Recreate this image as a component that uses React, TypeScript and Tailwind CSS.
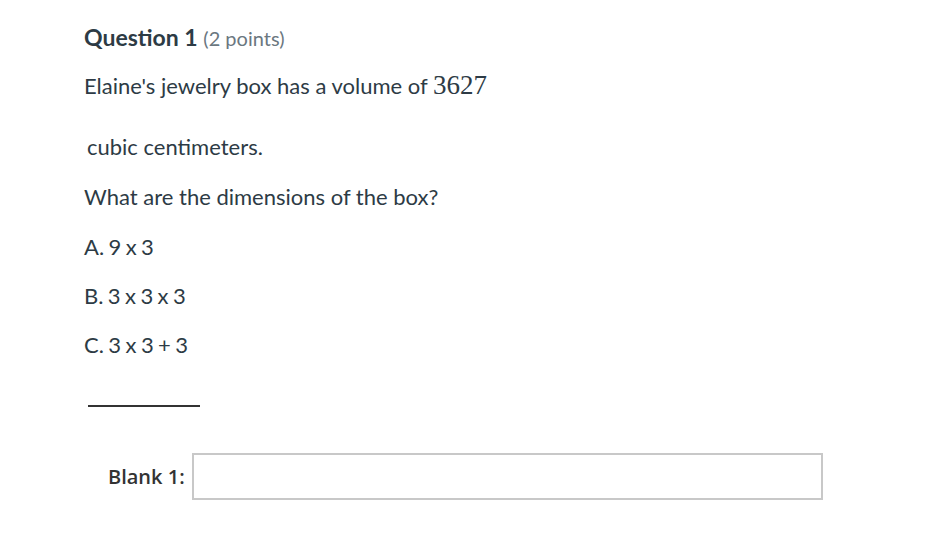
export default function App() {
  return (
    <div className="w-[946px] h-[534px] bg-white text-[#2d3b45] font-['Lato',sans-serif] text-[22px] overflow-hidden">
      <div className="pl-[84px] pt-[23px]">
        <h1 className="font-bold text-[23px] leading-[28px]">
          Question 1 <span className="font-normal text-[20px] text-[#6b7780]">(2 points)</span>
        </h1>
        <p className="mt-[18px] leading-[30px]">
          Elaine's jewelry box has a volume of{' '}
          <span className="font-['Liberation_Serif',serif] text-[27px]">3627</span>
        </p>
        <p className="mt-[32px] pl-[3px] leading-[28px]">cubic centimeters.</p>
        <p className="mt-[22px] leading-[28px]">What are the dimensions of the box?</p>
        <div className="[word-spacing:-1.2px]">
          <p className="mt-[22px] leading-[28px]">A. 9 x 3</p>
          <p className="mt-[21px] leading-[28px]">B. 3 x 3 x 3</p>
          <p className="mt-[21px] leading-[28px]">C. 3 x 3 + 3</p>
        </div>
        <div className="mt-[46px] ml-[4px] w-[112px] h-[2px] bg-[#333]" />
        <div className="mt-[46px] flex items-center">
          <span className="ml-[24px] mr-[7px] font-['Open_Sans',sans-serif] font-semibold text-[20px] text-[#333]">Blank 1:</span>
          <input className="w-[631px] h-[47px] border-2 border-[#c8c8c8] bg-white outline-none" />
        </div>
      </div>
    </div>
  )
}
